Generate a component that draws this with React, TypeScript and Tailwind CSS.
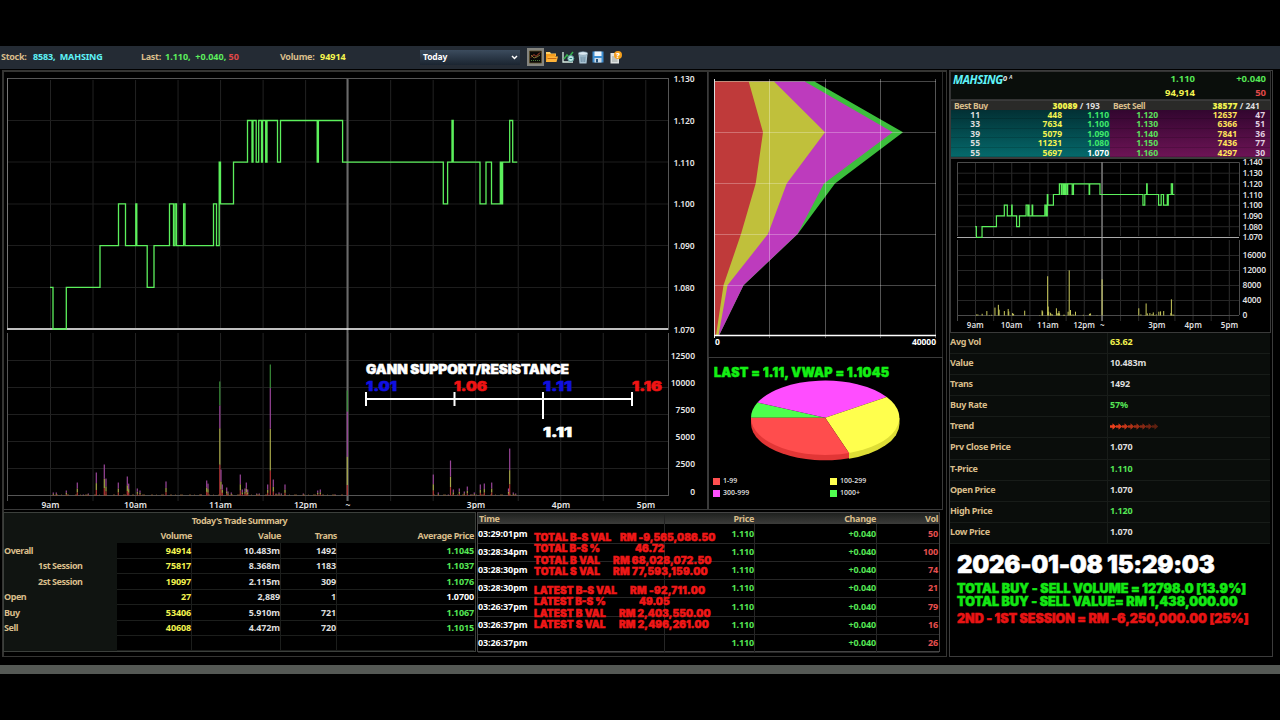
import React, { useLayoutEffect, useRef, useState } from 'react';
import clsx from 'clsx';

// [x on the intraday chart, price traded from that x onward]
const PRICES: [number, number][] = [
  [50, 1.08], [53, 1.07], [66.3, 1.08], [100, 1.09], [118.5, 1.1], [125.5, 1.09],
  [135.8, 1.1], [136.8, 1.09], [147.2, 1.08], [154, 1.09], [169.5, 1.1], [173.5, 1.09],
  [175, 1.1], [176.5, 1.09], [183.6, 1.1], [185, 1.09], [213.5, 1.1], [216.5, 1.09],
  [219.2, 1.11], [220.5, 1.1], [233.5, 1.11], [247.5, 1.12], [252, 1.11], [253, 1.12],
  [256.2, 1.11], [258.7, 1.12], [261.5, 1.11], [262.5, 1.12], [265.7, 1.11], [267, 1.12],
  [277.5, 1.11], [280.5, 1.12], [317.2, 1.11], [318.4, 1.12], [342.6, 1.11], [443.3, 1.1],
  [447.6, 1.11], [452, 1.12], [453.2, 1.11], [480, 1.1], [486, 1.11], [491.5, 1.1],
  [500.3, 1.11], [501.3, 1.1], [502.6, 1.11], [509.7, 1.12], [512.7, 1.11], [517.3, 1.11],
];

// [x, lots, optional split from the bottom: 1-99, 100-299, 300-999, 1000+]
const VOLUMES: [number, number, number[]?][] = [
  [53.3, 280], [56.3, 280], [66.3, 460], [77.3, 1200], [83.3, 90], [88.3, 185], [96.3, 2130],
  [104.3, 2870], [106, 1570], [118.3, 1200], [127.3, 1760], [128.7, 1100], [137.3, 650],
  [140, 460], [166, 1300], [201, 90], [206.7, 1390], [208, 1100],
  [219.8, 10560, [0.27, 0.32, 0.2, 0.21]], [221, 2400], [222.3, 1020], [226.7, 740],
  [228, 370], [231.3, 280], [240.3, 1940], [242.3, 560], [245, 650], [246.3, 1200],
  [247.7, 560], [256.7, 185], [259.3, 185], [267.7, 1020],
  [270.3, 12130, [0.19, 0.32, 0.31, 0.18]], [273.3, 1480], [276, 185], [279, 280],
  [281.3, 185], [285, 1020], [303.3, 185], [317.7, 460], [320.3, 560], [335.3, 90],
  [347.3, 9720, [0.1, 0.27, 0.43, 0.2]], [433.3, 1940], [438.3, 280], [448.3, 90],
  [450.5, 3240], [453.3, 560], [459.3, 650], [464.3, 370], [467.3, 830], [470.7, 90],
  [474.3, 280], [480.3, 1020], [484.3, 1110], [491.7, 1200], [508.5, 650],
  [509.7, 4350], [513.3, 280], [515.7, 185],
];

const SPLIT = [0.24, 0.3, 0.46, 0];
const BAR_COLORS = ['#b23434', '#a8a84a', '#9a459a', '#3a8f3a'];

const CHART_HOURS: [string, number][] = [
  ['9am', 50.5], ['10am', 135.5], ['11am', 220.5], ['12pm', 305.5], ['~', 348],
  ['3pm', 476], ['4pm', 561], ['5pm', 646],
];

const steps = (x: (v: number) => number, y: (p: number) => number) =>
  PRICES.map(([px, price], i) => (i === 0 ? `M${x(px)} ${y(price)}` : `H${x(px)}V${y(price)}`)).join('');

// Heavy caption stretched to a fixed width by its tracking
const Stamp: React.FC<{ text: string; width: number; className?: string }> = ({ text, width, className }) => {
  const ref = useRef<HTMLSpanElement>(null);
  const [spacing, setSpacing] = useState(0);

  useLayoutEffect(() => {
    if (ref.current) setSpacing((width - ref.current.offsetWidth) / (text.length - 1));
  }, [text, width]);

  return (
    <span
      ref={ref}
      className={clsx('inline-block whitespace-pre font-[Inter,sans-serif] font-black [-webkit-text-stroke:0.5px_currentColor]', className)}
      style={{ letterSpacing: spacing }}
    >
      {text}
    </span>
  );
};

const Toolbar: React.FC = () => (
  <div className="flex h-[23px] items-center bg-[#242b34] pb-px text-[9px] font-bold">
    <span className="w-[33px] pl-px text-[#d9bd8a] tracking-[-0.3px]">Stock:</span>
    <span className="w-[108px] whitespace-pre text-[#5ff3f8] tracking-[-0.15px]">{'8583,  MAHSING'}</span>
    <span className="w-[24px] text-[#d9bd8a] tracking-[-0.3px]">Last:</span>
    <span className="w-[115px] whitespace-pre text-[#5dee5d] tracking-normal">
      1.110,  +0.040, <span className="text-[#e04848]">50</span>
    </span>
    <span className="w-[40px] text-[#d9bd8a] tracking-[-0.3px]">Volume:</span>
    <span className="w-[100px] text-[#f6f64e]">94914</span>
    <button className="flex h-[15px] w-[100px] items-center justify-between bg-linear-to-b from-[#3c4c5e] to-[#1b2531] pl-[3px] pr-[2px] text-[8.5px] tracking-[-0.15px] text-white">
      Today
      <svg width="7" height="5" viewBox="0 0 7 5" fill="none" stroke="#fff" strokeWidth="1.4">
        <path d="M1 1l2.5 2.6L6 1" />
      </svg>
    </button>
    <div className="ml-[7px] flex items-center">
      <svg width="17" height="18" viewBox="0 0 17 18">
        <path d="M0 0h17v18H0z" fill="#85857f" />
        <path d="M2.500 3h12v12h-12z" fill="#0a0a08" stroke="#5b4c2a" strokeWidth=".8" />
        <path d="M4 9.500l3-3 2 2 4-4" stroke="#c04a30" fill="none" />
        <path d="M4 7l3 3 3-1 3-2" stroke="#9a8a40" fill="none" strokeWidth=".8" />
        <path d="M4 12.500h9" stroke="#4a7a3a" strokeDasharray="1 1" />
      </svg>
      <svg className="ml-[2px]" width="12" height="12" viewBox="0 0 12 12">
        <path d="M0 1h4l1 1.500h5V5H0z" fill="#ffd169" />
        <path d="M0 3h9.500v8H0z" fill="#f59d1d" />
        <path d="M2 5.500h10l-1.500 5.500H0z" fill="#ffb43a" />
        <path d="M1.500 7.500h9" stroke="#c86a10" />
      </svg>
      <svg className="ml-[4px]" width="13" height="12" viewBox="0 0 13 12">
        <path d="M1 1v10h10" stroke="#d9ede2" strokeWidth="1.300" fill="none" />
        <path d="M2 8l3-4 2 2 4-5" stroke="#37b24d" strokeWidth="1.500" fill="none" />
        <circle cx="8.800" cy="7.500" r="3" fill="#bfe6e3" stroke="#5a9b9a" />
        <path d="M7.500 7.500h2.600" stroke="#27807c" />
      </svg>
      <svg className="ml-[3px]" width="10" height="13" viewBox="0 0 10 13">
        <path d="M.5 3h9l-1 9.500h-7z" fill="#a9c4d4" />
        <ellipse cx="5" cy="2.500" rx="4.700" ry="1.800" fill="#dbe9f2" stroke="#7896aa" strokeWidth=".6" />
        <path d="M3 5.500l.3 5.500M5 5.500v5.500M7 5.500l-.3 5.500" stroke="#5d7f96" strokeWidth=".8" />
      </svg>
      <svg className="ml-[4px]" width="12" height="12" viewBox="0 0 12 12">
        <path d="M.5.5h11v11h-11z" fill="#3e8ed0" />
        <path d="M2.500.5h7V5h-7z" fill="#eef5fb" />
        <path d="M2.500 7h7v4.500h-7z" fill="#cfdde9" />
        <path d="M4 8h2v3.500H4z" fill="#23507a" />
      </svg>
      <svg className="ml-[6px]" width="12" height="13" viewBox="0 0 12 13">
        <path d="M.5 2h8.500v10.500H.5z" fill="#dfe3e2" />
        <path d="M2 6h4M2 8h5.500M2 10h5.500" stroke="#86908f" strokeWidth=".8" />
        <circle cx="8" cy="4" r="4" fill="#f59f1c" />
        <text x="8" y="6.600" fontSize="7.500" fontWeight="900" textAnchor="middle" fill="#fff">?</text>
      </svg>
    </div>
  </div>
);

const TimeGrid: React.FC<{ xs: number[]; top: number; bottom: number; color: string }> = ({ xs, top, bottom, color }) => (
  <g stroke={color}>
    {xs.map((x) => (
      <path key={x} d={`M${x} ${top}V${bottom}`} />
    ))}
  </g>
);

const GannScale: React.FC = () => (
  <g fontFamily="Inter, sans-serif" fontWeight="900" fontSize="12.500">
    <text x="366" y="374" fill="#fff" stroke="#fff" strokeWidth=".5" textLength="203" lengthAdjust="spacingAndGlyphs">
      GANN SUPPORT/RESISTANCE
    </text>
    <g strokeWidth=".5">
      <text x="366" y="390.500" fill="#1010e0" stroke="#1010e0" textLength="31" lengthAdjust="spacingAndGlyphs">1.01</text>
      <text x="454" y="390.500" fill="#f01414" stroke="#f01414" textLength="33" lengthAdjust="spacingAndGlyphs">1.06</text>
      <text x="543" y="390.500" fill="#1010e0" stroke="#1010e0" textLength="29" lengthAdjust="spacingAndGlyphs">1.11</text>
      <text x="632" y="390.500" fill="#f01414" stroke="#f01414" textLength="30" lengthAdjust="spacingAndGlyphs">1.16</text>
      <text x="543" y="437" fill="#fff" stroke="#fff" textLength="29" lengthAdjust="spacingAndGlyphs">1.11</text>
    </g>
    <path d="M366 399H632M366 392v14M454.500 392v14M543 392v27M632 392v14" stroke="#fff" strokeWidth="2" />
  </g>
);

const IntradayChart: React.FC = () => {
  const y = (p: number) => 329 - ((p - 1.07) / 0.01) * 41.7;
  const xs = Array.from({ length: 15 }, (_, i) => 50.5 + i * 42.52);

  return (
    <svg width="703" height="437" viewBox="4 72 703 437" fontSize="8.500" fontWeight="600" fill="#e6e6e6">
      <TimeGrid xs={xs} top={80} bottom={328} color="#222" />
      <TimeGrid xs={xs} top={333} bottom={501} color="#242424" />
      <path d="M8 120.500H668M8 162H668M8 204H668M8 245.500H668M8 287.500H668" stroke="#1d1d1d" />
      <path d="M8 360.500H668M8 387.500H668M8 414.500H668M8 441.500H668M8 468.500H668" stroke="#1f1f1f" />
      <path d="M7.500 78.500H668.500M7.500 501V333M668.500 78V328M668.500 333V496M7.500 495.500H668" stroke="#565656" fill="none" />
      <path d="M7.500 78V328" stroke="#777" />
      <path d="M347.500 79V501" stroke="#6a6a6a" strokeWidth="2" />
      <path d="M7 329H668.500" stroke="#fff" strokeWidth="1.500" />
      <path d={steps((v) => v, y)} fill="none" stroke="#5cf05c" strokeWidth="1.300" />
      {VOLUMES.map(([x, lots, split = SPLIT]) => {
        let top = 495.5;
        return split.map((part, i) => {
          const h = (lots * part * 27) / 2500;
          top -= h;
          return <rect key={`${x}-${i}`} x={x - 0.6} y={top} width="1.200" height={h} fill={BAR_COLORS[i]} />;
        });
      })}
      <path d="M56 495H345M433 495H516" stroke="#8a5a30" strokeWidth=".8" strokeDasharray="2 3 1 4 3 6" />
      {[1.13, 1.12, 1.11, 1.1, 1.09, 1.08, 1.07].map((p) => (
        <text key={p} x="673.500" y={y(p) + 3.5} textLength="21">{p.toFixed(3)}</text>
      ))}
      {[12500, 10000, 7500, 5000, 2500, 0].map((v, i) => (
        <text key={v} x="695" y={359 + i * 27.1} textAnchor="end">{v}</text>
      ))}
      {CHART_HOURS.map(([label, x]) => (
        <text key={label} x={x} y="508" textAnchor="middle">{label}</text>
      ))}
      <GannScale />
    </svg>
  );
};

const DepthChart: React.FC = () => (
  <svg width="233" height="284" viewBox="709 72 233 284" fontSize="8.500" fontWeight="700" fill="#fff">
    <path d="M714.500 81.500H814.500L903 132.300L835 183.500L797.700 234L743.500 285.300L719 335.500H714.500z" fill="#3cbf3c" />
    <path d="M714.500 81.500H804.700L892.700 132.300L824 183.500L797.500 234L743.500 285.300L719 335.500H714.500z" fill="#bd3bbd" />
    <path d="M714.500 81.500H774L825 132.300L786.700 183.500L768 234L727.500 285.300L718.500 335.500H714.500z" fill="#c0c03b" />
    <path d="M714.500 81.500H748.700L763 132.300L755.700 183.500L741 234L723.500 285.300L716 335.500H714.500z" fill="#bf3a3a" />
    <path d="M769.500 79V338M825.500 79V338M880.500 79V338M935.500 79V338" stroke="#fff" strokeOpacity=".33" />
    <path d="M714 81.500H936M714 132.500H936M714 183.500H936M714 234.500H936M714 285.500H936" stroke="#fff" strokeOpacity=".28" />
    <path d="M714.500 79V338" stroke="#ddd" />
    <path d="M714 335.500H936" stroke="#fff" strokeWidth="1.300" />
    <text x="715" y="345">0</text>
    <text x="936" y="345" textAnchor="end" textLength="24">40000</text>
  </svg>
);

const LEGEND = [
  ['1-99', 'bg-[#ff5050]'],
  ['100-299', 'bg-[#ffff50]'],
  ['300-999', 'bg-[#ff50ff]'],
  ['1000+', 'bg-[#50ff50]'],
];

const LotPie: React.FC = () => (
  <div className="flex h-[153px] flex-col border border-[#3a3a3a] pl-[5px]">
    <div className="mt-px h-[15px]">
      <Stamp text="LAST = 1.11, VWAP = 1.1045" width={175} className="text-[12.5px] leading-[15px] text-[#14f014]" />
    </div>
    <svg className="ml-[35px] mt-[5px]" width="152" height="84" viewBox="749 379 152 84">
      <path d="M751 417.800v6a74 37 0 0 0 98 34.500v-6z" fill="#e23636" />
      <path d="M899.500 417.800v6a74 37 0 0 1-50.500 35v-6z" fill="#dede36" />
      <path d="M825.200 417.800L751 417.800A74.200 37.200 0 0 1 757.500 402.600z" fill="#4dff4d" />
      <path d="M825.200 417.800L757.500 402.600A74.200 37.200 0 0 1 886.700 397z" fill="#ff4dff" />
      <path d="M825.200 417.800L886.700 397A74.200 37.200 0 0 1 849 453z" fill="#ffff4d" />
      <path d="M825.200 417.800L849 453A74.200 37.200 0 0 1 751 417.800z" fill="#ff4d4d" />
    </svg>
    <div className="mt-[12px] -ml-px grid grid-cols-[117px_1fr] text-[7px] leading-[12px] font-semibold text-[#d8d8d8]">
      {LEGEND.map(([label, color]) => (
        <div key={label} className="flex items-center gap-[3px]">
          <span className={clsx('size-[7px]', color)} />
          {label}
        </div>
      ))}
    </div>
  </div>
);

const SUMMARY = [
  ['Overall', '94914', '10.483m', '1492', '1.1045'],
  ['1st Session', '75817', '8.368m', '1183', '1.1037'],
  ['2st Session', '19097', '2.115m', '309', '1.1076'],
  ['Open', '27', '2,889', '1', '1.0700'],
  ['Buy', '53406', '5.910m', '721', '1.1067'],
  ['Sell', '40608', '4.472m', '720', '1.1015'],
  ['', '', '', '', ''],
];

const TradeSummary: React.FC = () => (
  <div className="-ml-px h-[140px] w-[473px] border border-[#3c403c] text-[9px] font-bold tracking-[-0.12px] text-[#ddd]">
    <div className="h-[15px] bg-[#101411] text-center leading-[15px] tracking-[-0.5px] text-[#d9bd8a]">Today's Trade Summary</div>
    <div className="grid h-[15px] grid-cols-[113px_75px_89px_56px_137px] bg-[#101411] text-right leading-[16px] tracking-[-0.4px] text-[#d9bd8a]">
      <span />
      <span>Volume</span>
      <span>Value</span>
      <span>Trans</span>
      <span>Average Price</span>
    </div>
    {SUMMARY.map(([label, volume, value, trans, price], i) => (
      <div key={i} className="grid h-[15.4px] grid-cols-[113px_75px_89px_56px_137px] text-right leading-[15px]">
        <span
          className={clsx(
            'bg-[#101411] text-left tracking-[-0.45px] text-[#d9bd8a]',
            label.includes('Session') && 'pl-[34px]'
          )}
        >
          {label}
        </span>
        <span className="border-r border-b border-[#1c1e1c] text-[#f3f350]">{volume}</span>
        <span className="border-r border-b border-[#1c1e1c]">{value}</span>
        <span className="border-r border-b border-[#1c1e1c]">{trans}</span>
        <span className={clsx('border-b border-[#1c1e1c]', label === 'Open' ? 'text-white' : 'text-[#55e655]')}>{price}</span>
      </div>
    ))}
  </div>
);

const TICKS = [
  ['03:29:01pm', '50'],
  ['03:28:34pm', '100'],
  ['03:28:30pm', '74'],
  ['03:28:30pm', '21'],
  ['03:26:37pm', '79'],
  ['03:26:37pm', '16'],
  ['03:26:37pm', '26'],
];

// label, label width, offset of the value, value, value width
const TOTALS: [string, number, number, string, number][] = [
  ['TOTAL B-S VAL', 77, 86, 'RM -9,565,086.50', 95],
  ['TOTAL B-S %', 66, 101, '46.72', 29],
  ['TOTAL B VAL', 66, 79, 'RM 68,028,072.50', 98],
  ['TOTAL S VAL', 66, 79, 'RM 77,593,159.00', 95],
  ['LATEST B-S VAL', 83, 96, 'RM -92,711.00', 75],
  ['LATEST B-S %', 72, 105, '49.05', 31],
  ['LATEST B VAL', 72, 85, 'RM 2,403,550.00', 92],
  ['LATEST S VAL', 72, 85, 'RM 2,496,261.00', 90],
];

const TickTable: React.FC = () => (
  <div className="relative h-[140px] w-[463px] border border-[#444] text-[9px] font-bold">
    <div className="grid h-[11px] grid-cols-[187px_89px_122px_62px] bg-linear-to-b from-[#1f211f] to-[#3c3c3a] text-right leading-[12px] text-[#d9bd8a] tracking-[-0.35px]">
      <span className="border-r border-[#222] pl-px text-left">Time</span>
      <span>Price</span>
      <span>Change</span>
      <span>Vol</span>
    </div>
    {TICKS.map(([time, vol], i) => (
      <div key={i} className="grid h-[18.15px] grid-cols-[187px_90px_122px_62px] text-right leading-[19px] tracking-[-0.12px] text-[#55e655]">
        <span className="border-r border-b border-[#262626] text-left tracking-[-0.1px] text-white">{time}</span>
        <span className="border-r border-b border-[#262626]">1.110</span>
        <span className="border-r border-b border-[#262626]">+0.040</span>
        <span className="border-b border-[#262626] pr-px text-[#e85050]">{vol}</span>
      </div>
    ))}
    <div className="absolute top-[19px] left-[56px]">
      {TOTALS.map(([label, width, offset, value, valueWidth], i) => (
        <div key={label} className={clsx('relative h-[11.3px] leading-[11px] text-[#f01818]', i === 4 && 'mt-[8px]')}>
          <Stamp text={label} width={width} className="text-[10px]" />
          <span className="absolute top-0" style={{ left: offset }}>
            <Stamp text={value} width={valueWidth} className="text-[10px]" />
          </span>
        </div>
      ))}
    </div>
  </div>
);

const BOOK = [
  ['11', '448', '1.110', '1.120', '12637', '47'],
  ['33', '7634', '1.100', '1.130', '6366', '51'],
  ['39', '5079', '1.090', '1.140', '7841', '36'],
  ['55', '11231', '1.080', '1.150', '7436', '77'],
  ['55', '5697', '1.070', '1.160', '4297', '30'],
];

const OrderBook: React.FC = () => (
  <div className="h-[58px] w-[321px] border border-[#3a3a3a] text-[8.5px] font-bold">
    <div className="grid h-[9px] grid-cols-[159px_160px] bg-[#2a2a28] leading-[9px]">
      <div className="flex justify-between pl-[3px] pr-[10px] text-[#ddd]">
        <span className="tracking-[-0.4px] text-[#d9bd8a]">Best Buy</span>
        <span><b className="text-[#f3f350]">30089</b> / 193</span>
      </div>
      <div className="flex justify-between pl-[3px] pr-[10px] text-[#ddd]">
        <span className="tracking-[-0.4px] text-[#d9bd8a]">Best Sell</span>
        <span><b className="text-[#f3f350]">38577</b> / 241</span>
      </div>
    </div>
    <div className="flex h-[47px] text-right leading-[9.4px]">
      <div className="w-[159px] bg-linear-to-b from-[#023034] to-[#056a6c]">
        {BOOK.map(([count, volume, bid], i) => (
          <div key={i} className="grid grid-cols-[29px_82px_47px] border-b border-black/15 h-[9.4px]">
            <span className="text-[#ddd]">{count}</span>
            <span className="text-[#f3f350]">{volume}</span>
            <span className={bid === '1.070' ? 'text-white' : 'text-[#3fe96a]'}>{bid}</span>
          </div>
        ))}
      </div>
      <div className="w-[160px] bg-linear-to-b from-[#32062f] to-[#6e1456]">
        {BOOK.map(([, , , ask, volume, count]) => (
          <div key={ask} className="grid grid-cols-[48px_79px_28px] border-b border-black/15 h-[9.4px]">
            <span className="text-[#5be05b]">{ask}</span>
            <span className="text-[#ffe45a]">{volume}</span>
            <span className="text-[#e0cfe0]">{count}</span>
          </div>
        ))}
      </div>
    </div>
  </div>
);

const MiniChart: React.FC = () => {
  const x = (v: number) => 975.3 + (v - 50.5) * 0.4268;
  const y = (p: number) => 237.3 - ((p - 1.07) / 0.01) * 10.7;
  const xs = Array.from({ length: 15 }, (_, i) => 975.5 + i * 18.13);

  return (
    <svg className="overflow-visible border border-[#3a3a3a]" width="321" height="175" viewBox="951 159 319 173" fontSize="8.500" fontWeight="600" fill="#dedede">
      <TimeGrid xs={xs} top={162} bottom={236} color="#2b2b2b" />
      <TimeGrid xs={xs} top={240} bottom={321} color="#2b2b2b" />
      <g stroke="#262626">
        {[1, 2, 3, 4, 5, 6].map((i) => (
          <path key={i} d={`M957 ${162.5 + i * 10.7}H1239`} />
        ))}
        <path d="M957 255.500H1239M957 270.500H1239M957 285.500H1239M957 300.500H1239" />
      </g>
      <path d="M957.500 321V240M957.500 236V162.500H1239.500V236M1239.500 240V315M957 315.500H1239" stroke="#4a4a4a" fill="none" />
      <path d="M1102 162V321" stroke="#777" strokeWidth="1.500" />
      <path d="M957 237.500H1239" stroke="#aaa" />
      <path d={steps(x, y)} fill="none" stroke="#5cf05c" strokeWidth="1.200" />
      {VOLUMES.map(([vx, lots]) => (
        <rect key={vx} x={x(vx) - 0.4} y={315.5 - lots * 0.00372} width="1" height={lots * 0.00372} fill="#c9c95a" />
      ))}
      {[1.14, 1.13, 1.12, 1.11, 1.1, 1.09, 1.08, 1.07].map((p) => (
        <text key={p} x="1242.500" y={y(p) + 3} textLength="20">{p.toFixed(3)}</text>
      ))}
      {[16000, 12000, 8000, 4000, 0].map((v, i) => (
        <text key={v} x="1242.500" y={258 + i * 15} letterSpacing="-.2">{v}</text>
      ))}
      {CHART_HOURS.map(([label, hx]) => (
        <text key={label} x={x(hx)} y="328" textAnchor="middle" fontSize="8">{label}</text>
      ))}
    </svg>
  );
};

const Trend: React.FC = () => (
  <svg width="50" height="7" viewBox="0 0 50 7" fill="#f0401c">
    {Array.from({ length: 8 }, (_, i) => (
      <path key={i} d={`M${i * 6} 2.300h2.500V.3l3.700 3.200-3.700 3.200V4.700h-2.500z`} opacity={1 - i * 0.09} />
    ))}
  </svg>
);

const STATS: [string, React.ReactNode, string][] = [
  ['Avg Vol', '63.62', 'text-[#f3f350]'],
  ['Value', '10.483m', 'text-[#ddd]'],
  ['Trans', '1492', 'text-[#ddd]'],
  ['Buy Rate', '57%', 'text-[#55e655]'],
  ['Trend', <Trend key="trend" />, ''],
  ['Prv Close Price', '1.070', 'text-[#ddd]'],
  ['T-Price', '1.110', 'text-[#55e655]'],
  ['Open Price', '1.070', 'text-[#ddd]'],
  ['High Price', '1.120', 'text-[#55e655]'],
  ['Low Price', '1.070', 'text-[#ddd]'],
];

const StockPanel: React.FC = () => (
  <div className="ml-[2px] h-[587px] w-[324px] border border-[#3c3c3c]">
    <div className="flex h-[29px] w-[321px] justify-between border border-[#333] bg-[#0a0e0b] px-[2px] pr-[4px] text-[9.5px] font-bold">
      <div className="text-[11.5px] leading-[15px] italic tracking-[-0.4px] text-[#5ff3f8]">
        MAHSING<sup className="-top-[3px] text-[8px] text-[#ddd]">o ᴬ</sup>
      </div>
      <div className="grid grid-cols-[70px_71px] text-right leading-[14px]">
        <span className="text-[#55e655]">1.110</span>
        <span className="text-[#55e655]">+0.040</span>
        <span className="text-[#f3f350]">94,914</span>
        <span className="text-[#e04848]">50</span>
      </div>
    </div>
    <OrderBook />
    <MiniChart />
    <div className="w-[320px] text-[9px] font-bold tracking-[-0.12px]">
      {STATS.map(([label, value, color]) => (
        <div key={label} className="grid h-[21.1px] grid-cols-[158px_1fr] border-b border-[#181c19] bg-[#0a0d0b] leading-[18px]">
          <span className="border-r border-[#181c19] tracking-[-0.35px] text-[#d9bd8a]">{label}</span>
          <span className={clsx('flex h-[18px] items-center pl-[2px]', color)}>{value}</span>
        </div>
      ))}
    </div>
    <div className="flex flex-col pl-[7px]">
      <Stamp text="2026-01-08 15:29:03" width={258} className="mt-[7px] self-start text-[24px] leading-[28px] text-white" />
      <Stamp text="TOTAL BUY - SELL VOLUME = 12798.0 [13.9%]" width={289} className="mt-[3px] self-start text-[12.5px] leading-[13.500px] text-[#14e814]" />
      <Stamp text="TOTAL BUY - SELL VALUE= RM 1,438,000.00" width={281} className="self-start text-[12.5px] leading-[13.500px] text-[#14e814]" />
      <Stamp text="2ND - 1ST SESSION = RM -6,250,000.00 [25%]" width={292} className="mt-[3px] self-start text-[12.5px] leading-[13.500px] text-[#e81414]" />
    </div>
  </div>
);

const App: React.FC = () => {
  return (
    <div className="h-[720px] w-[1280px] overflow-hidden bg-black pt-[46px] font-['Noto_Sans',sans-serif]">
      <Toolbar />
      <div className="flex h-[596px] pt-px">
        <div className="ml-[2px] h-[587px] w-[945px] border border-t-2 border-l-2 border-[#353533]">
          <div className="flex h-[440px]">
            <div className="h-[438px] w-[704px] border-r border-b border-[#3a3a3a]">
              <IntradayChart />
            </div>
            <div className="w-[235px]">
              <div className="h-[285px] border-l border-r border-[#2c2c2c]">
                <DepthChart />
              </div>
              <LotPie />
            </div>
          </div>
          <div className="flex gap-px">
            <TradeSummary />
            <TickTable />
          </div>
        </div>
        <StockPanel />
      </div>
      <div className="h-[9px] bg-[#555955]" />
    </div>
  );
};

export default App;
